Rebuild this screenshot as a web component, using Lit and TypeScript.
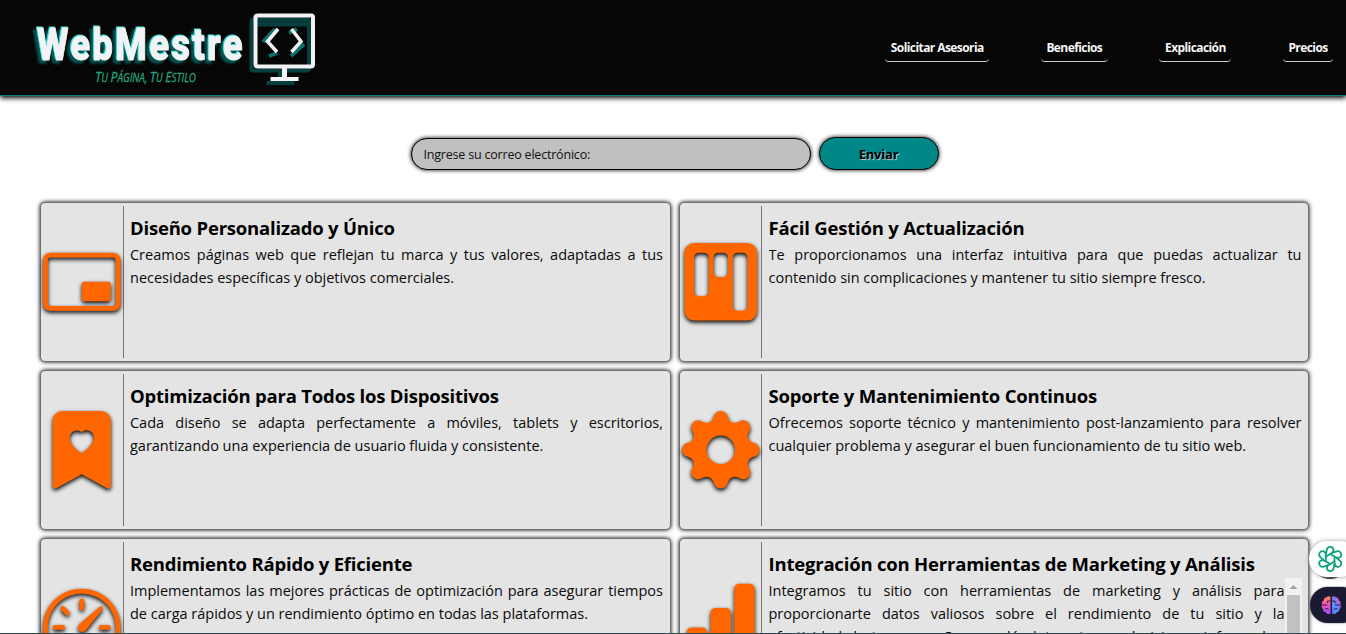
import { LitElement, html, css, svg } from "lit";
import { customElement } from "lit/decorators.js";

const icons: Record<string, string> = {
  pip: "M0 3.5A1.5 1.5 0 0 1 1.5 2h13A1.5 1.5 0 0 1 16 3.5v9a1.5 1.5 0 0 1-1.5 1.5h-13A1.5 1.5 0 0 1 0 12.5zM1.5 3a.5.5 0 0 0-.5.5v9a.5.5 0 0 0 .5.5h13a.5.5 0 0 0 .5-.5v-9a.5.5 0 0 0-.5-.5zM8 8.5a.5.5 0 0 1 .5-.5h5a.5.5 0 0 1 .5.5v3a.5.5 0 0 1-.5.5h-5a.5.5 0 0 1-.5-.5z",
  kanban: "M2.5 0a2 2 0 0 0-2 2v12a2 2 0 0 0 2 2h11a2 2 0 0 0 2-2V2a2 2 0 0 0-2-2zm5 2h1a1 1 0 0 1 1 1v3a1 1 0 0 1-1 1h-1a1 1 0 0 1-1-1V3a1 1 0 0 1 1-1m-5 1a1 1 0 0 1 1-1h1a1 1 0 0 1 1 1v7a1 1 0 0 1-1 1h-1a1 1 0 0 1-1-1zm9-1h1a1 1 0 0 1 1 1v10a1 1 0 0 1-1 1h-1a1 1 0 0 1-1-1V3a1 1 0 0 1 1-1",
  bookmark: "M2 15.5a.5.5 0 0 0 .74.439L8 13.069l5.26 2.87A.5.5 0 0 0 14 15.5V2a2 2 0 0 0-2-2H4a2 2 0 0 0-2 2zM8 4.41c1.387-1.425 4.854 1.07 0 4.277C3.146 5.48 6.613 2.986 8 4.412z",
  gear: "M9.405 1.05c-.413-1.4-2.397-1.4-2.81 0l-.1.34a1.464 1.464 0 0 1-2.105.872l-.31-.17c-1.283-.698-2.686.705-1.987 1.987l.169.311c.446.82.023 1.841-.872 2.105l-.34.1c-1.4.413-1.4 2.397 0 2.81l.34.1a1.464 1.464 0 0 1 .872 2.105l-.17.31c-.698 1.283.705 2.686 1.987 1.987l.311-.169a1.464 1.464 0 0 1 2.105.872l.1.34c.413 1.4 2.397 1.4 2.81 0l.1-.34a1.464 1.464 0 0 1 2.105-.872l.31.17c1.283.698 2.686-.705 1.987-1.987l-.169-.311a1.464 1.464 0 0 1 .872-2.105l.34-.1c1.4-.413 1.4-2.397 0-2.81l-.34-.1a1.464 1.464 0 0 1-.872-2.105l.17-.31c.698-1.283-.705-2.686-1.987-1.987l-.311.169a1.464 1.464 0 0 1-2.105-.872zM8 10.93a2.929 2.929 0 1 1 0-5.86 2.929 2.929 0 0 1 0 5.858z",
  speed: "M8 4a.5.5 0 0 1 .5.5V6a.5.5 0 0 1-1 0V4.5A.5.5 0 0 1 8 4M3.732 5.732a.5.5 0 0 1 .707 0l.915.914a.5.5 0 1 1-.708.708l-.914-.915a.5.5 0 0 1 0-.707M2 10a.5.5 0 0 1 .5-.5h1.586a.5.5 0 0 1 0 1H2.5A.5.5 0 0 1 2 10m9.5 0a.5.5 0 0 1 .5-.5h1.5a.5.5 0 0 1 0 1H12a.5.5 0 0 1-.5-.5m.754-4.246a.39.39 0 0 0-.527-.02L7.547 9.31a.91.91 0 1 0 1.302 1.258l3.434-4.297a.39.39 0 0 0-.029-.518zM0 10a8 8 0 1 1 15.547 2.661c-.442 1.253-1.845 1.602-2.932 1.25C11.309 13.488 9.475 13 8 13c-1.474 0-3.31.488-4.615.911-1.087.352-2.49.003-2.932-1.25A8 8 0 0 1 0 10m8-7a7 7 0 0 0-6.603 9.329c.203.575.923.876 1.68.63C4.397 12.533 6.358 12 8 12s3.604.532 4.923.96c.757.245 1.477-.056 1.68-.631A7 7 0 0 0 8 3",
  bars: "M1 11a1 1 0 0 1 1-1h2.200a1 1 0 0 1 1 1v3a1 1 0 0 1-1 1H2a1 1 0 0 1-1-1zm4.900-4a1 1 0 0 1 1-1h2.200a1 1 0 0 1 1 1v7a1 1 0 0 1-1 1H6.900a1 1 0 0 1-1-1zm4.900-5a1 1 0 0 1 1-1h2.200a1 1 0 0 1 1 1v12a1 1 0 0 1-1 1h-2.200a1 1 0 0 1-1-1z",
};

interface Benefit {
  icon: string;
  title: string;
  lines: string[];
  scroll?: boolean;
}

const benefits: Benefit[] = [
  { icon: "pip", title: "Diseño Personalizado y Único", lines: ["Creamos páginas web que reflejan tu marca y tus valores, adaptadas a tus", "necesidades específicas y objetivos comerciales."] },
  { icon: "kanban", title: "Fácil Gestión y Actualización", lines: ["Te proporcionamos una interfaz intuitiva para que puedas actualizar tu", "contenido sin complicaciones y mantener tu sitio siempre fresco."] },
  { icon: "bookmark", title: "Optimización para Todos los Dispositivos", lines: ["Cada diseño se adapta perfectamente a móviles, tablets y escritorios,", "garantizando una experiencia de usuario fluida y consistente."] },
  { icon: "gear", title: "Soporte y Mantenimiento Continuos", lines: ["Ofrecemos soporte técnico y mantenimiento post-lanzamiento para resolver", "cualquier problema y asegurar el buen funcionamiento de tu sitio web."] },
  { icon: "speed", title: "Rendimiento Rápido y Eficiente", lines: ["Implementamos las mejores prácticas de optimización para asegurar tiempos", "de carga rápidos y un rendimiento óptimo en todas las plataformas."] },
  { icon: "bars", title: "Integración con Herramientas de Marketing y Análisis", scroll: true, lines: ["Integramos tu sitio con herramientas de marketing y análisis para", "proporcionarte datos valiosos sobre el rendimiento de tu sitio y la", "efectividad de tus campañas, ayudándote a tomar decisiones informadas."] },
];

@customElement("benefit-card")
class BenefitCard extends LitElement {
  static properties = { benefit: { attribute: false } };
  declare benefit: Benefit;

  static styles = css`
    :host { display: flex; box-sizing: border-box; height: 160px; padding: 3px 6.500px 3px 2px; border: 1px solid #6f6f6f; border-radius: 5px; background: #e4e4e4; box-shadow: 0 0 4px #000; }
    .icon { box-sizing: border-box; width: 80.500px; flex: none; display: flex; align-items: center; border-right: 1px solid #777; }
    .glyph { width: 77.500px; height: 77.500px; margin-bottom: 1px; fill: #ff6600; overflow: visible; filter: drop-shadow(0 2px 2px #000); flex: none; }
    .body { flex: 1; min-width: 0; padding: 9px 0 0 6.500px; }
    .title { margin: 0; font: 700 18.5px/25px "Open Sans", sans-serif; letter-spacing: -0.2px; white-space: nowrap; color: #000; }
    .copy { display: flex; height: 116px; padding-top: 1px; box-sizing: border-box; overflow: hidden; }
    .text { flex: 1; margin: 2px 0 0; font: 400 14.5px/23px "Open Sans", sans-serif; letter-spacing: -0.01px; color: #0a0a0a; }
    .line { display: block; white-space: nowrap; text-align: justify; text-align-last: justify; }
    .line.last { text-align-last: left; }
    .track { width: 17px; flex: none; background: #f1f1f1; display: flex; flex-direction: column; align-items: center; margin-top: 1px; }
    .arrow { width: 17px; height: 17px; fill: #a3a3a3; flex: none; }
    .thumb { width: 13px; flex: 1; background: #c1c1c1; }
  `;

  render() {
    const b = this.benefit;
    return html`
      <div class="icon"><svg class="glyph" viewBox="0 0 16 16"><path fill-rule="evenodd" d=${icons[b.icon]} /></svg></div>
      <div class="body">
        <h3 class="title">${b.title}</h3>
        <div class="copy">
          <p class="text">${b.lines.map((l, i) => html`<span class="line ${i === 1 && !b.scroll ? "last" : ""}">${l}</span>`)}</p>
          ${b.scroll ? html`<div class="track"><svg class="arrow" viewBox="0 0 17 17"><path d="M4.5 11h8l-4-4z" /></svg><div class="thumb"></div></div>` : ""}
        </div>
      </div>`;
  }
}

@customElement("app-root")
class AppRoot extends LitElement {
  static styles = css`
    :host { display: block; position: relative; box-sizing: border-box; width: 1346px; height: 634px; overflow: hidden; background: #fff; border-bottom: 1px solid #2f4a48; font-family: "Open Sans", sans-serif; }
    .header { box-sizing: border-box; height: 96px; background: #060606; border-bottom: 1px solid #0b7d7d; box-shadow: 0 2px 5px #000; display: flex; justify-content: space-between; }
    .logo { width: 330px; height: 95px; }
    .wordmark { filter: drop-shadow(-1px -1px 0 #2ce5d8) drop-shadow(-3px 3px 1px #065553); }
    .nav { display: flex; gap: 51.600px; padding: 38px 13px 0 0; height: 24px; }
    .link { box-sizing: border-box; height: 24px; padding: 0 4px; border-bottom: 1px solid #ccc; border-radius: 4px; color: #f6f6f6; font: 700 12px/20px "Open Sans", sans-serif; letter-spacing: -0.58px; text-align: center; white-space: nowrap; }
    .l0 { width: 104px; } .l1 { width: 67px; } .l2 { width: 72px; } .l3 { width: 50px; }
    .form { display: flex; align-items: center; gap: 8px; padding: 41px 0 0 411px; height: 33px; }
    .field { box-sizing: border-box; width: 400px; height: 32px; margin-top: 1px; border: 1px solid #000; border-radius: 16px; padding: 0 11.500px; background: #c0c0c0; box-shadow: 0 0 4px #000; font: 400 12.5px/31px "Open Sans", sans-serif; letter-spacing: -0.2px; color: #111; }
    .send { box-sizing: border-box; width: 120px; height: 33px; border: 1px solid #000; border-radius: 17px; background: #008888; box-shadow: 0 0 4px #000; font: 700 13px/31px "Open Sans", sans-serif; letter-spacing: -0.2px; text-align: center; text-shadow: 1px 1px 1px #ccc; color: #000; padding: 1px 1px 0 0; }
    .grid { display: grid; grid-template-columns: 630.500px 630.500px; gap: 8px; padding: 32px 0 0 40px; }
    .chat { position: absolute; left: 1309px; top: 541px; width: 50px; height: 36px; border-radius: 18px; background: #fff; box-shadow: 0 0 4px #999; }
    .under { position: absolute; left: 1312px; top: 543px; width: 36px; height: 36px; border-radius: 18px; background: #1b1a33; }
    .brain { position: absolute; left: 1310px; top: 587px; width: 50px; height: 36px; border-radius: 18px; background: #1b1a33; box-shadow: 0 0 2px #555; }
    .mark { display: block; width: 36px; height: 36px; }
  `;

  private screen() {
    return svg`<rect x="255.500" y="15.500" width="57.500" height="51" rx="2" /><path stroke-width="5" d="M284.500 67v11" /><path d="M270.500 79h28" />`;
  }

  render() {
    const nav = ["Solicitar Asesoria", "Beneficios", "Explicación", "Precios"];
    return html`
      <header class="header">
        <svg class="logo" viewBox="0 0 330 95">
          <text class="wordmark" x="37" y="59.500" font-family="Roboto" font-weight="800" font-size="44" letter-spacing="3" textLength="208" lengthAdjust="spacingAndGlyphs" fill="#f3f3f5" stroke="#f3f3f5" stroke-width="1">WebMestre</text>
          <text x="95" y="81.500" font-family="Open Sans" font-style="italic" fill="#26a37c" stroke="#26a37c" stroke-width=".3" font-size="12" textLength="101" lengthAdjust="spacingAndGlyphs"><tspan font-size="15">T</tspan>U <tspan font-size="15">P</tspan>ÁGINA, <tspan font-size="15">T</tspan>U <tspan font-size="15">E</tspan>STILO</text>
          <g fill="none" stroke="#063f3e" stroke-width="4" transform="translate(-4 4)">${this.screen()}</g>
          <path d="M257 24h53" stroke="#063f3e" stroke-width="5" />
          <path d="m275 29-12 13M277 53l-8 3M297 29l-8 4M304 44l-13 12" fill="none" stroke="#08706d" stroke-width="4" />
          <g fill="none" stroke="#f3f3f5" stroke-width="4">${this.screen()}<path stroke-width="3.500" d="m278 29-10.500 12.500 9.500 10.500M291.500 29l9.500 12.500-9.500 10.500" /></g>
        </svg>
        <nav class="nav">${nav.map((n, i) => html`<a class="link l${i}">${n}</a>`)}</nav>
      </header>
      <div class="form"><div class="field">Ingrese su correo electrónico:</div><button class="send">Enviar</button></div>
      <main class="grid">${benefits.map((b) => html`<benefit-card .benefit=${b}></benefit-card>`)}</main>
      <div class="under"></div>
      <div class="chat">
        <svg class="mark" viewBox="0 0 36 36">
          <g fill="none" stroke="#10a37f" stroke-width="1.800" stroke-linejoin="round" stroke-linecap="round" transform="translate(21.200 18)">
            ${[0, 60, 120, 180, 240, 300].map((a) => svg`<path transform="rotate(${a})" d="M-4.200 -5.200L-3.300 -9.600C-2.800 -11.500 -1.400 -12.200 0 -12.200S2.800 -11.500 3.300 -9.600C3.700 -7.800 3 -6.800 1.500 -6L-4 -2.600" />`)}
          </g>
        </svg>
      </div>
      <div class="brain">
        <svg class="mark" viewBox="0 0 36 36">
          <defs>
            <linearGradient id="warm" x1="0" y1="0" x2="0" y2="1"><stop offset="0" stop-color="#ff8a4a" /><stop offset=".5" stop-color="#ee4fc0" /><stop offset="1" stop-color="#a050ff" /></linearGradient>
            <linearGradient id="cool" x1="1" y1="0" x2="0" y2="1"><stop offset="0" stop-color="#ff8c52" /><stop offset=".35" stop-color="#a267f5" /><stop offset=".7" stop-color="#3e9cff" /><stop offset="1" stop-color="#8050f5" /></linearGradient>
          </defs>
          <path fill="url(#warm)" d="M20.500 10v16.500c-2 1.300-4 .5-4.600-1.200-2 0-3-1.500-2.600-3-1.600-1-2-3-1.300-4.600-.4-2 .3-3.800 1.800-4.200 0-2 1.400-3.200 3-3.200 1-1.400 2.700-1.200 3.700-.3z" />
          <path fill="url(#cool)" d="M22 10v16.500c2 1.300 4 .5 4.600-1.200 2 0 3-1.500 2.600-3 1.600-1 2-3 1.300-4.600.4-2-.3-3.800-1.800-4.200 0-2-1.400-3.200-3-3.200-1-1.400-2.700-1.200-3.700-.3z" />
          <path fill="none" stroke="#1b1a33" stroke-width=".9" d="M20.500 14h-3v2M12 18h5.500M15 22c2-1 3-.5 3.500 1M22 14h3v2M30.500 18H25M27.500 22c-2-1-3-.5-3.500 1" />
        </svg>
      </div>`;
  }
}
